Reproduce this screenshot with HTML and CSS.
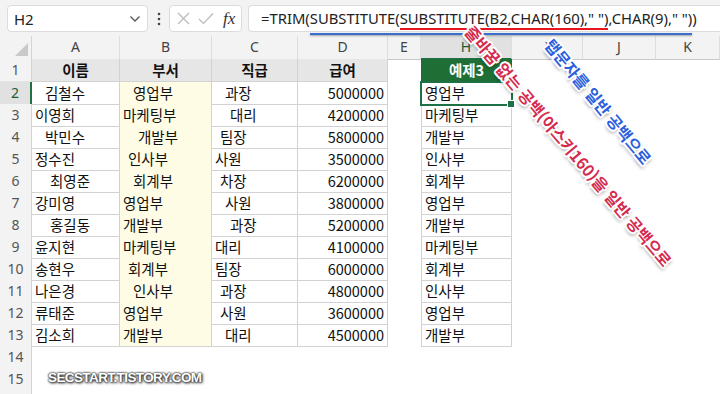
FILE: index.html
```html
<!DOCTYPE html>
<html lang="ko">
<head>
  <meta charset="UTF-8">
  <title>TRIM SUBSTITUTE 예제</title>
  <link rel="stylesheet" href="styles.css">
</head>
<body>
  <div class="formula-bar">
    <div class="name-box">
      <span>H2</span>
      <svg class="chevron" width="12" height="8" viewBox="0 0 12 8"><path d="M1.5 1.5 L6 6 L10.5 1.5"/></svg>
    </div>
    <div class="dots">
      <svg width="4" height="14" viewBox="0 0 4 14"><circle cx="2" cy="2" r="1.3"/><circle cx="2" cy="7" r="1.3"/><circle cx="2" cy="12" r="1.3"/></svg>
    </div>
    <div class="fx-box">
      <svg class="x-icon" width="13" height="13" viewBox="0 0 13 13"><path d="M1 1 L12 12 M12 1 L1 12"/></svg>
      <svg class="ok-icon" width="16" height="13" viewBox="0 0 16 13"><path d="M1 7 L5.5 11.5 L15 1.5"/></svg>
      <span class="fx">fx</span>
    </div>
    <div class="formula">=TRIM(<span class="u-blue">SUBSTITUTE(<span class="u-red">SUBSTITUTE(B2,CHAR(160)," ")</span>,CHAR(9)," ")</span>)</div>
  </div>

  <div class="sheet">
    <div class="row head">
      <div class="corner"><svg width="13" height="13" viewBox="0 0 13 13"><polygon points="13,0 13,13 0,13"/></svg></div>
      <div class="ch">A</div><div class="ch">B</div><div class="ch">C</div><div class="ch">D</div>
      <div class="ch">E</div><div class="ch active">H</div><div class="ch">I</div><div class="ch">J</div><div class="ch">K</div>
    </div>
    <div class="row first">
      <div class="rh">1</div>
      <div class="c th">이름</div><div class="c th">부서</div><div class="c th">직급</div><div class="c th">급여</div>
      <div></div><div class="c h green">예제3</div><div></div><div></div><div></div>
    </div>
    <div class="row">
      <div class="rh active">2</div>
      <div class="c s2">김철수</div><div class="c y s2">영업부</div><div class="c s2">과장</div><div class="c n">5000000</div>
      <div></div><div class="c h sel">영업부</div><div></div><div></div><div></div>
    </div>
    <div class="row">
      <div class="rh">3</div>
      <div class="c">이영희</div><div class="c y">마케팅부</div><div class="c s3">대리</div><div class="c n">4200000</div>
      <div></div><div class="c h">마케팅부</div><div></div><div></div><div></div>
    </div>
    <div class="row">
      <div class="rh">4</div>
      <div class="c s2">박민수</div><div class="c y s3">개발부</div><div class="c s1">팀장</div><div class="c n">5800000</div>
      <div></div><div class="c h">개발부</div><div></div><div></div><div></div>
    </div>
    <div class="row">
      <div class="rh">5</div>
      <div class="c">정수진</div><div class="c y s1">인사부</div><div class="c">사원</div><div class="c n">3500000</div>
      <div></div><div class="c h">인사부</div><div></div><div></div><div></div>
    </div>
    <div class="row">
      <div class="rh">6</div>
      <div class="c s3">최영준</div><div class="c y s2">회계부</div><div class="c s1">차장</div><div class="c n">6200000</div>
      <div></div><div class="c h">회계부</div><div></div><div></div><div></div>
    </div>
    <div class="row">
      <div class="rh">7</div>
      <div class="c">강미영</div><div class="c y">영업부</div><div class="c s2">사원</div><div class="c n">3800000</div>
      <div></div><div class="c h">영업부</div><div></div><div></div><div></div>
    </div>
    <div class="row">
      <div class="rh">8</div>
      <div class="c s3">홍길동</div><div class="c y">개발부</div><div class="c s3">과장</div><div class="c n">5200000</div>
      <div></div><div class="c h">개발부</div><div></div><div></div><div></div>
    </div>
    <div class="row">
      <div class="rh">9</div>
      <div class="c">윤지현</div><div class="c y">마케팅부</div><div class="c">대리</div><div class="c n">4100000</div>
      <div></div><div class="c h">마케팅부</div><div></div><div></div><div></div>
    </div>
    <div class="row">
      <div class="rh">10</div>
      <div class="c">송현우</div><div class="c y s1">회계부</div><div class="c">팀장</div><div class="c n">6000000</div>
      <div></div><div class="c h">회계부</div><div></div><div></div><div></div>
    </div>
    <div class="row">
      <div class="rh">11</div>
      <div class="c">나은경</div><div class="c y s2">인사부</div><div class="c s1">과장</div><div class="c n">4800000</div>
      <div></div><div class="c h">인사부</div><div></div><div></div><div></div>
    </div>
    <div class="row">
      <div class="rh">12</div>
      <div class="c">류태준</div><div class="c y">영업부</div><div class="c s1">사원</div><div class="c n">3600000</div>
      <div></div><div class="c h">영업부</div><div></div><div></div><div></div>
    </div>
    <div class="row">
      <div class="rh">13</div>
      <div class="c">김소희</div><div class="c y">개발부</div><div class="c s2">대리</div><div class="c n">4500000</div>
      <div></div><div class="c h">개발부</div><div></div><div></div><div></div>
    </div>
    <div class="row"><div class="rh">14</div></div>
    <div class="row"><div class="rh">15</div></div>
    <div class="row"><div class="rh"></div></div>
  </div>

  <div class="note red">줄바꿈 없는 공백(아스키160)을 일반 공백으로</div>
  <div class="note blue">탭문자를 일반 공백으로</div>
  <div class="watermark">SECSTART.TISTORY.COM</div>
</body>
</html>
```

FILE: styles.css
```css
* {
  margin: 0;
  padding: 0;
  box-sizing: border-box;
}

body {
  width: 720px;
  height: 394px;
  overflow: hidden;
  position: relative;
  background-color: #fff;
  font-family: "Noto Sans", "Noto Sans CJK KR", sans-serif;
  color: #1b1b1b;
}

/* formula bar */
.formula-bar {
  display: flex;
  align-items: flex-start;
  height: 36px;
  padding: 5px 0 0 7px;
  background-color: #f3f3f3;
}

.name-box {
  width: 141px;
  height: 27px;
  background-color: #fff;
  border: 1px solid #dcdcdc;
  border-radius: 4px;
  display: flex;
  align-items: center;
  justify-content: space-between;
  padding: 0 6px 0 6px;
  font-size: 15px;
  color: #222;
}

.chevron path {
  fill: none;
  stroke: #555;
  stroke-width: 1.3;
}

.dots {
  width: 21px;
  height: 27px;
  display: flex;
  align-items: center;
  justify-content: center;
}

.dots circle {
  fill: #444;
}

.fx-box {
  width: 73px;
  height: 27px;
  background-color: #fff;
  border: 1px solid #dcdcdc;
  border-radius: 4px;
  display: flex;
  align-items: center;
  padding-left: 7px;
  gap: 8px;
}

.x-icon path,
.ok-icon path {
  fill: none;
  stroke: #b9b9b9;
  stroke-width: 1.2;
}

.fx {
  font-family: "Liberation Serif", serif;
  font-style: italic;
  font-size: 17px;
  color: #333;
  margin-left: 1px;
}

.formula {
  flex: 1;
  height: 27px;
  margin-left: 6px;
  background-color: #fff;
  border: 1px solid #dcdcdc;
  border-right: none;
  border-radius: 4px 0 0 4px;
  padding-left: 12px;
  font-size: 14.8px;
  line-height: 25px;
  white-space: pre;
  color: #222;
}

.u-blue,
.u-red {
  position: relative;
}

.u-red::after {
  content: "";
  position: absolute;
  left: 0;
  right: 0;
  bottom: -2px;
  height: 2px;
  background-color: #e8141e;
}

.u-blue::after {
  content: "";
  position: absolute;
  left: 0;
  right: 0;
  bottom: -7px;
  height: 2px;
  background-color: #3a6fd0;
  box-shadow: 0 1px 2px rgba(0, 0, 0, 0.35);
}

/* sheet grid */
.row {
  display: grid;
  grid-template-columns: 32px 88px 92px 86px 90px 33px 91px 71px 73px 1fr;
  height: 22px;
}

.row.head {
  height: 23px;
}

.row.first {
  height: 23px;
}

.corner {
  background-color: #f3f3f3;
  border-right: 1px solid #d4d4d4;
  border-bottom: 1px solid #c8c8c8;
  display: flex;
  align-items: flex-end;
  justify-content: flex-end;
  padding: 0 3px 3px 0;
}

.corner polygon {
  fill: #c9c9c9;
}

.ch {
  background-color: #f3f3f3;
  border-right: 1px solid #dedede;
  border-bottom: 1px solid #c8c8c8;
  text-align: center;
  font-size: 14px;
  line-height: 22px;
  color: #444;
}

.ch.active {
  background-color: #e1e1e1;
  border-bottom: 2px solid #1e7145;
  color: #1d5b36;
}

.rh {
  background-color: #f3f3f3;
  border-right: 1px solid #d4d4d4;
  border-bottom: 1px solid #e3e3e3;
  text-align: center;
  font-size: 14px;
  line-height: 22px;
  color: #555;
}

.rh.active {
  background-color: #e1e1e1;
  border-right: 2px solid #1e7145;
  color: #1d5b36;
}

.c {
  border-right: 1px solid #d2d2d2;
  border-bottom: 1px solid #d2d2d2;
  padding: 0 3px;
  font-family: "Noto Sans CJK KR", "Noto Sans", sans-serif;
  font-size: 14.5px;
  line-height: 21px;
  white-space: nowrap;
  color: #111;
}

.c.th {
  background-color: #e7e6e6;
  font-weight: bold;
  text-align: center;
  line-height: 22px;
}

.c.y {
  background-color: #fffce6;
}

.c.n {
  text-align: right;
}

.c.h {
  border-left: 1px solid #d2d2d2;
}

.c.green {
  background-color: #1f6e35;
  border-color: #1f6e35;
  color: #fff;
  font-weight: bold;
  text-align: center;
  line-height: 22px;
}

.c.sel {
  position: relative;
  outline: 2px solid #1e7145;
  outline-offset: -1px;
}

.c.sel::after {
  content: "";
  position: absolute;
  right: -4px;
  bottom: -4px;
  width: 6px;
  height: 6px;
  background-color: #1e7145;
  border: 1px solid #fff;
}

.s1 { padding-left: 8px; }
.s2 { padding-left: 13px; }
.s3 { padding-left: 18px; }

/* annotations drawn over the sheet */
.note {
  position: absolute;
  font-family: "Noto Sans CJK KR", sans-serif;
  font-weight: bold;
  font-size: 16px;
  line-height: 20px;
  white-space: nowrap;
  transform-origin: 0 50%;
  text-shadow:
    -1.5px -1.5px 0 #fff, 1.5px -1.5px 0 #fff, -1.5px 1.5px 0 #fff, 1.5px 1.5px 0 #fff,
    0 -2px 0 #fff, 0 2px 0 #fff, -2px 0 0 #fff, 2px 0 0 #fff,
    2px 2px 4px rgba(0, 0, 0, 0.6);
}

.note.red {
  left: 469px;
  top: 18px;
  color: #d42b4e;
  transform: rotate(49.7deg);
}

.note.blue {
  left: 549px;
  top: 31px;
  color: #2c60dc;
  transform: rotate(50.5deg);
}

.watermark {
  position: absolute;
  left: 48px;
  top: 370px;
  font-family: "Liberation Sans", sans-serif;
  font-weight: bold;
  font-size: 13.5px;
  letter-spacing: -0.6px;
  color: #fff;
  text-shadow: 0 0 2px #333, 0 0 2px #333, 1px 1px 3px #000;
}
```
